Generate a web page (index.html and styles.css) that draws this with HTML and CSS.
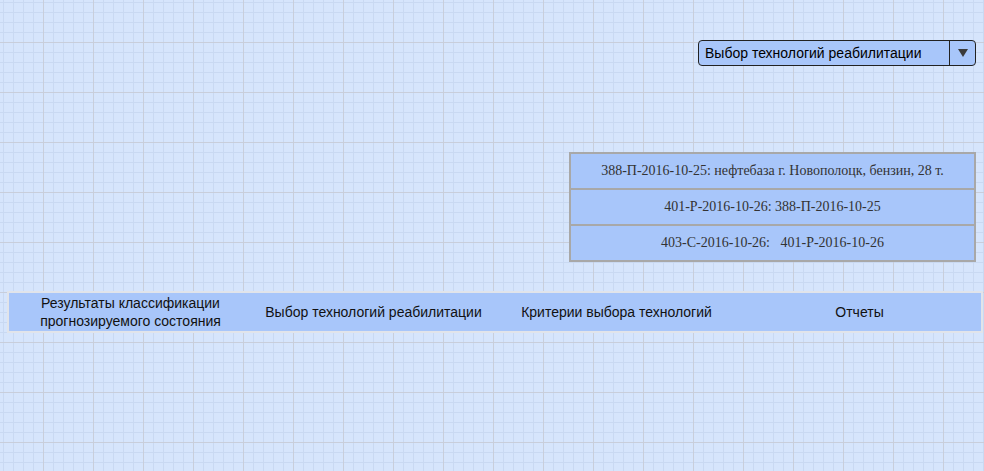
FILE: index.html
```html
<!DOCTYPE html>
<html>
<head>
<meta charset="utf-8">
<link rel="stylesheet" href="styles.css">
</head>
<body>
<div class="page">
  <div class="right-col">
    <div class="select">
      <span class="select-label">Выбор технологий реабилитации</span>
      <span class="select-btn"><span class="arrow"></span></span>
    </div>
    <div class="list">
      <div class="list-row">388-П-2016-10-25: нефтебаза г. Новополоцк, бензин, 28 т.</div>
      <div class="list-row">401-Р-2016-10-26: 388-П-2016-10-25</div>
      <div class="list-row">403-С-2016-10-26: &nbsp; 401-Р-2016-10-26</div>
    </div>
  </div>
  <div class="nav">
    <div class="nav-item">Результаты классификации<br>прогнозируемого состояния</div>
    <div class="nav-item">Выбор технологий реабилитации</div>
    <div class="nav-item">Критерии выбора технологий</div>
    <div class="nav-item">Отчеты</div>
  </div>
</div>
</body>
</html>
```
FILE: styles.css
```css
html, body {
  margin: 0;
  padding: 0;
}
body {
  width: 984px;
  height: 471px;
  overflow: hidden;
  background-color: #d6e5fc;
  background-image:
    linear-gradient(to right, #c8cedb 1px, transparent 1px),
    linear-gradient(to bottom, #c8cedb 1px, transparent 1px),
    linear-gradient(to right, #c9d9f2 1px, transparent 1px),
    linear-gradient(to bottom, #c9d9f2 1px, transparent 1px);
  background-size: 50px 50px, 50px 50px, 10px 10px, 10px 10px;
  background-position: 43px 42px, 43px 42px, 3px 2px, 3px 2px;
  font-family: "Liberation Sans", Arial, sans-serif;
}
.page {
  display: flex;
  flex-direction: column;
}
.right-col {
  display: flex;
  flex-direction: column;
  align-items: flex-end;
  padding-top: 40px;
  padding-right: 8px;
}
.select {
  width: 276px;
  height: 24px;
  border: 1px solid #222;
  border-radius: 4px;
  background: #a8c6fa;
  display: flex;
  align-items: stretch;
  box-sizing: content-box;
}
.select-label {
  flex: 1;
  font-size: 14px;
  line-height: 24px;
  padding-left: 6px;
  color: #000;
}
.select-btn {
  width: 25px;
  border-left: 1px solid #222;
  display: flex;
  align-items: center;
  justify-content: center;
}
.arrow {
  width: 0;
  height: 0;
  border-left: 5px solid transparent;
  border-right: 5px solid transparent;
  border-top: 8px solid #3a3a3a;
}
.list {
  margin-top: 86px;
  width: 403px;
  border: 2px solid #a8a8a8;
  background: #a8c6fa;
}
.list-row {
  height: 34px;
  line-height: 34px;
  text-align: center;
  font-family: "Liberation Serif", "Times New Roman", serif;
  font-size: 14px;
  color: #333;
}
.list-row + .list-row {
  border-top: 2px solid #a8a8a8;
}
.nav {
  margin: 29px 0 0 7px;
  width: 972px;
  height: 38px;
  border: 2px solid #e1e4ea;
  background: #a8c6fa;
  display: grid;
  grid-template-columns: repeat(4, 1fr);
}
.nav-item {
  display: flex;
  align-items: center;
  justify-content: center;
  text-align: center;
  font-size: 14px;
  line-height: 18px;
  color: #111;
}
```
